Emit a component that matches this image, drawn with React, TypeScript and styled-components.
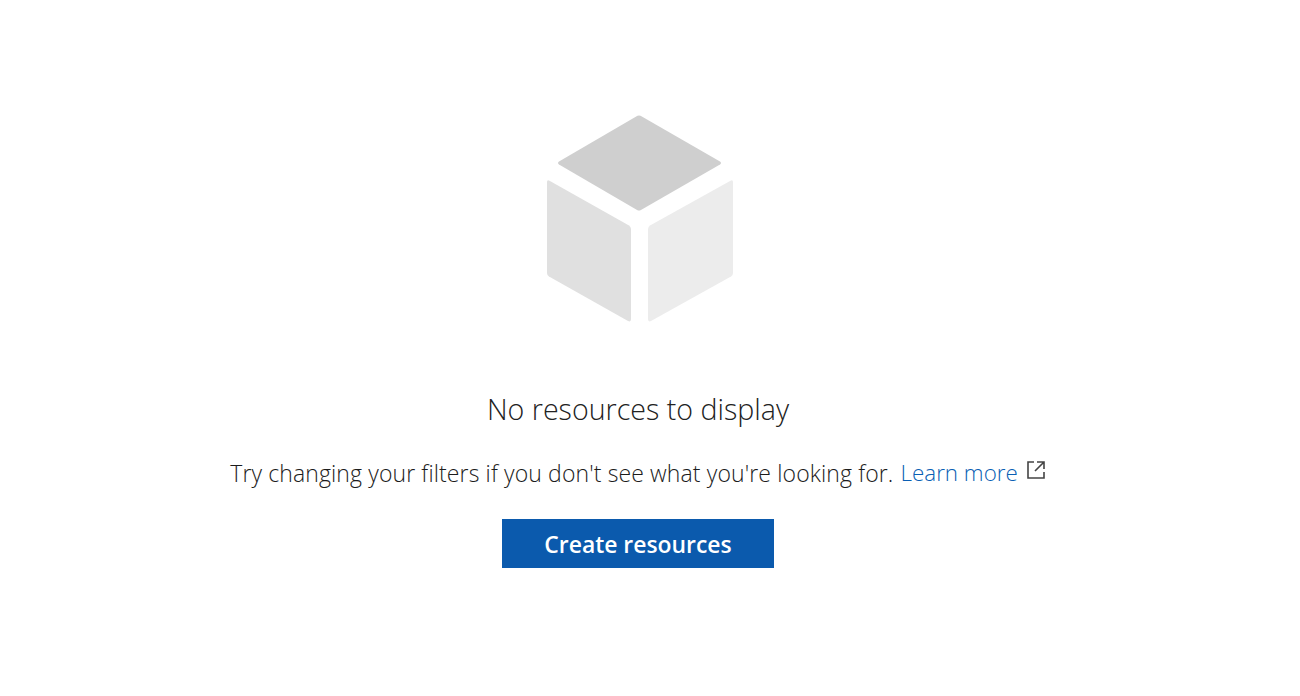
import React from "react";
import styled, { createGlobalStyle } from "styled-components";

const Global = createGlobalStyle`
  html, body { margin: 0; padding: 0; background: #fff; }
  body { font-family: "Open Sans", "Noto Sans", "Liberation Sans", sans-serif; }
`;

const Page = styled.main`
  width: 1300px;
  height: 696px;
  box-sizing: border-box;
  padding: 114px 24px 0 0;
  display: flex;
  flex-direction: column;
  align-items: center;
  overflow: hidden;
`;

const CubeIcon = styled.svg`
  display: block;
  width: 192px;
  height: 210px;
`;

const Title = styled.h1`
  margin: 65px 0 0;
  font-size: 28.6px;
  line-height: 40px;
  font-weight: 300;
  color: #222;
`;

const Hint = styled.p`
  margin: 29px 0 0;
  font-size: 23px;
  line-height: 30px;
  font-weight: 300;
  letter-spacing: 0.12px;
  color: #1c1c1c;
  white-space: nowrap;
  display: flex;
  align-items: center;
`;

const LearnLink = styled.a`
  color: #0a5fb4;
  text-decoration: none;
  font-size: 22.4px;
  letter-spacing: 0;
  margin-left: 7px;
`;

const External = styled.svg`
  width: 20px;
  height: 20px;
  margin-left: 8px;
  margin-top: -6px;
`;

const CreateButton = styled.button`
  margin: 31px 0 0;
  width: 272px;
  height: 49px;
  padding: 2px 0 0;
  border: 0;
  background: #0b5aad;
  color: #fff;
  font-family: inherit;
  font-size: 22.9px;
  font-weight: 600;
`;

export default function App() {
  return (
    <Page>
      <Global />
      <CubeIcon viewBox="0 0 192 210" aria-hidden="true">
        <path fill="#cfcfcf" d="M95.5 1.8 Q97 1 98.5 1.8 L178 47.5 Q180 49 178 50.5 L98.5 96.2 Q97 97 95.5 96.2 L17 50.5 Q15 49 17 47.5 Z" />
        <path fill="#e0e0e0" d="M5 68 Q5 65.5 7.5 66.7 L87 111.5 Q89 113 89 115 V205 Q89 208.5 86 207 L7 162.5 Q5 161 5 159 Z" />
        <path fill="#ececec" d="M191 68 Q191 65.5 188.5 66.7 L108 111.5 Q106 113 106 115 V205 Q106 208.5 109 207 L189 162.5 Q191 161 191 159 Z" />
      </CubeIcon>
      <Title>No resources to display</Title>
      <Hint>
        Try changing your filters if you don't see what you're looking for.
        <LearnLink href="#">Learn more</LearnLink>
        <External viewBox="0 0 20 20" fill="none" stroke="#444" strokeWidth="1.6" aria-hidden="true">
          <path d="M8 2H2v16h16v-6" />
          <path d="M11 2h7v7M18 2 9 11" />
        </External>
      </Hint>
      <CreateButton>Create resources</CreateButton>
    </Page>
  );
}
